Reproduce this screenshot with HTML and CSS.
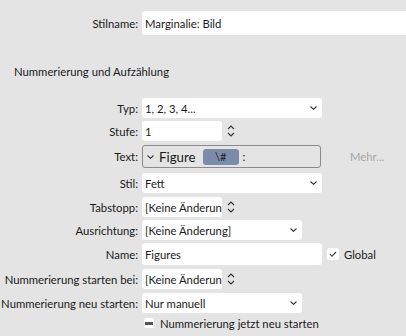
FILE: index.html
```html
<!DOCTYPE html>
<html lang="de">
<head>
<meta charset="utf-8">
<link rel="stylesheet" href="styles.css">
</head>
<body>
<div class="form">
  <div class="row r-stilname">
    <span class="label">Stilname:</span>
    <div class="field f-full">Marginalie: Bild</div>
  </div>
  <div class="heading">Nummerierung und Aufzählung</div>

  <div class="row r-typ">
    <span class="label">Typ:</span>
    <div class="field f-wide select">1, 2, 3, 4...<svg class="chev" viewBox="0 0 7 4"><path d="M0.5 0.5 L3.5 3.3 L6.5 0.5"/></svg></div>
  </div>
  <div class="row r-stufe">
    <span class="label">Stufe:</span>
    <div class="field f-small">1</div>
    <svg class="spin" viewBox="0 0 8 14"><path d="M1 5 L4 2 L7 5 M1 9 L4 12 L7 9"/></svg>
  </div>
  <div class="row r-text">
    <span class="label">Text:</span>
    <div class="token-box">
      <svg class="chev chev-left" viewBox="0 0 7 4"><path d="M0.5 0.5 L3.5 3.3 L6.5 0.5"/></svg>
      <span class="big">Figure</span>
      <span class="token">\#</span>
      <span class="colon">:</span>
    </div>
    <span class="more">Mehr...</span>
  </div>
  <div class="row r-stil">
    <span class="label">Stil:</span>
    <div class="field f-wide select">Fett<svg class="chev" viewBox="0 0 7 4"><path d="M0.5 0.5 L3.5 3.3 L6.5 0.5"/></svg></div>
  </div>
  <div class="row r-tab">
    <span class="label">Tabstopp:</span>
    <div class="field f-small clip">[Keine Änderung]</div>
    <svg class="spin" viewBox="0 0 8 14"><path d="M1 5 L4 2 L7 5 M1 9 L4 12 L7 9"/></svg>
  </div>
  <div class="row r-aus">
    <span class="label">Ausrichtung:</span>
    <div class="field f-mid select">[Keine Änderung]<svg class="chev" viewBox="0 0 7 4"><path d="M0.5 0.5 L3.5 3.3 L6.5 0.5"/></svg></div>
  </div>
  <div class="row r-name">
    <span class="label">Name:</span>
    <div class="field f-wide tall">Figures</div>
    <span class="check"><svg viewBox="0 0 12 12"><path d="M3 6.2 L5 8.2 L9 4"/></svg></span>
    <span class="check-label">Global</span>
  </div>
  <div class="row r-start">
    <span class="label">Nummerierung starten bei:</span>
    <div class="field f-small clip">[Keine Änderung]</div>
    <svg class="spin" viewBox="0 0 8 14"><path d="M1 5 L4 2 L7 5 M1 9 L4 12 L7 9"/></svg>
  </div>
  <div class="row r-neu">
    <span class="label">Nummerierung neu starten:</span>
    <div class="field f-mid select">Nur manuell<svg class="chev" viewBox="0 0 7 4"><path d="M0.5 0.5 L3.5 3.3 L6.5 0.5"/></svg></div>
  </div>
  <div class="row r-jetzt">
    <span class="label"></span>
    <span class="indet"><span class="dash"></span></span>
    <span class="jetzt-label">Nummerierung jetzt neu starten</span>
  </div>
</div>
</body>
</html>
```
FILE: styles.css
```css
html, body {
  margin: 0;
  padding: 0;
  background: #e4e4e4;
  width: 406px;
  height: 336px;
  overflow: hidden;
}
body {
  font-family: Lato, "Noto Sans", sans-serif;
  font-size: 11.3px;
  color: #1a1a1a;
}
.form {
  display: flex;
  flex-direction: column;
  padding-top: 11px;
}
.row {
  display: flex;
  align-items: center;
}
.label {
  width: 138px;
  flex: none;
  display: flex;
  justify-content: flex-end;
  margin-right: 4px;
  white-space: nowrap;
}
.field {
  background: #fff;
  border-radius: 3px;
  height: 20px;
  box-sizing: border-box;
  padding-left: 3px;
  display: flex;
  align-items: center;
  white-space: nowrap;
  overflow: hidden;
}
.clip { padding-right: 2px; }
.f-full { flex: 1; height: 24px; border-radius: 3px 0 0 3px; }
.f-wide { width: 180px; }
.f-mid { width: 160px; }
.f-small { width: 80px; }
.tall { height: 22px; }
.select { justify-content: space-between; padding-right: 5px; }
.chev {
  width: 7px;
  height: 4px;
  flex: none;
  fill: none;
  stroke: #333;
  stroke-width: 1.1;
}
.spin {
  width: 8px;
  height: 14px;
  flex: none;
  margin-left: 5px;
  fill: none;
  stroke: #333;
  stroke-width: 1.1;
}
.heading { margin-top: 29px; height: 16px; line-height: 16px; padding-left: 14px; }
.r-typ { margin-top: 18px; }
.r-stufe { margin-top: 3px; }
.r-text { margin-top: 4px; }
.r-stil { margin-top: 5px; }
.r-tab { margin-top: 4px; }
.r-aus { margin-top: 3px; }
.r-name { margin-top: 3px; }
.r-start { margin-top: 4px; }
.r-neu { margin-top: 4px; }
.r-jetzt { margin-top: 3px; height: 14px; }

.token-box {
  width: 179px;
  height: 23px;
  box-sizing: border-box;
  border: 1px solid #8a8a8a;
  border-radius: 3px;
  display: flex;
  align-items: center;
  padding-left: 4px;
}
.chev-left { margin-right: 5px; }
.big { font-size: 13.3px; margin-right: 7px; }
.token {
  background: #7b8cab;
  border-radius: 3px;
  width: 36px;
  height: 16px;
  display: flex;
  align-items: center;
  justify-content: center;
  font-size: 11px;
  color: #1a1a1a;
}
.colon { margin-left: 4px; }
.more { margin-left: 29px; color: #a6a6a6; }

.check {
  width: 12px;
  height: 12px;
  background: #fff;
  border-radius: 2px;
  margin-left: 5px;
  display: flex;
}
.check svg {
  width: 12px;
  height: 12px;
  fill: none;
  stroke: #444;
  stroke-width: 1.1;
}
.check-label { margin-left: 5px; }
.indet {
  width: 10px;
  height: 10px;
  background: #fff;
  border-radius: 2px;
  margin-left: 2px;
  display: flex;
  align-items: center;
  justify-content: center;
}
.dash { width: 8px; height: 3px; background: #555; }
.jetzt-label { margin-left: 6px; }
```
